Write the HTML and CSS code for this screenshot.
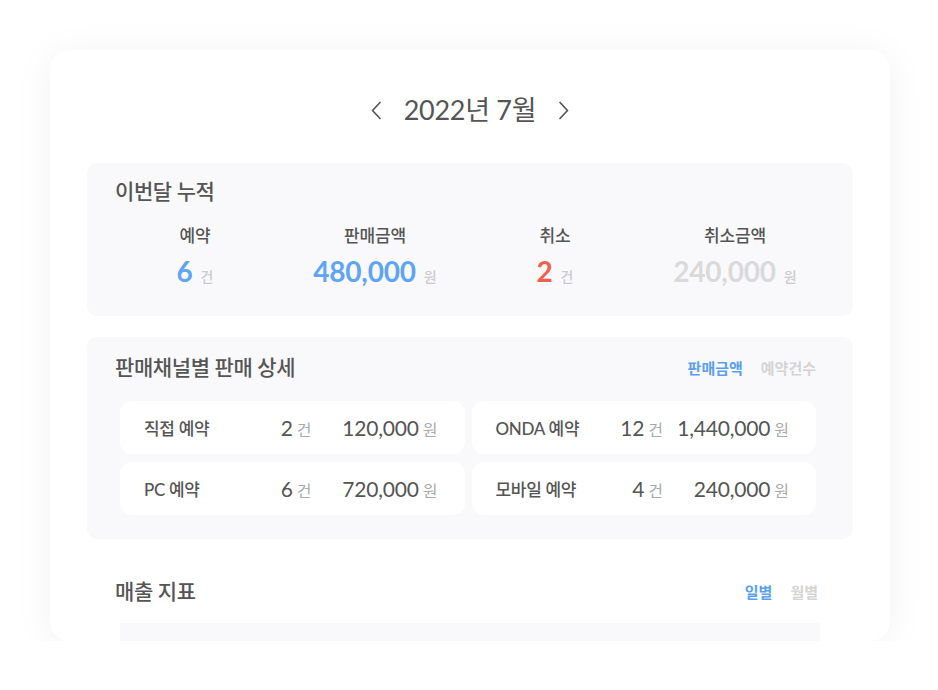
FILE: index.html
```html
<!DOCTYPE html>
<html lang="ko">
<head>
<meta charset="utf-8">
<title>매출 현황</title>
<link rel="stylesheet" href="styles.css">
</head>
<body>
<div class="page">
  <div class="card">
    <div class="month">
      <button class="nav" aria-label="이전 달">
        <svg width="11" height="19" viewBox="0 0 11 19"><path d="M9 1.5 L1.5 9.5 L9 17.5" fill="none" stroke="#555" stroke-width="1.7" stroke-linecap="round" stroke-linejoin="round"/></svg>
      </button>
      <h1 class="month-title">2022년 7월</h1>
      <button class="nav" aria-label="다음 달">
        <svg width="11" height="19" viewBox="0 0 11 19"><path d="M2 1.5 L9.5 9.5 L2 17.5" fill="none" stroke="#555" stroke-width="1.7" stroke-linecap="round" stroke-linejoin="round"/></svg>
      </button>
    </div>

    <section class="panel summary">
      <h2 class="panel-title">이번달 누적</h2>
      <div class="stats">
        <div class="stat">
          <div class="stat-label">예약</div>
          <div class="stat-value blue">6<span class="unit">건</span></div>
        </div>
        <div class="stat">
          <div class="stat-label">판매금액</div>
          <div class="stat-value blue">480,000<span class="unit">원</span></div>
        </div>
        <div class="stat">
          <div class="stat-label">취소</div>
          <div class="stat-value red">2<span class="unit">건</span></div>
        </div>
        <div class="stat">
          <div class="stat-label">취소금액</div>
          <div class="stat-value muted">240,000<span class="unit">원</span></div>
        </div>
      </div>
    </section>

    <section class="panel channels">
      <div class="panel-head">
        <h2 class="panel-title">판매채널별 판매 상세</h2>
        <div class="tabs">
          <span class="tab active">판매금액</span>
          <span class="tab">예약건수</span>
        </div>
      </div>
      <div class="channel-grid">
        <div class="channel">
          <span class="channel-name">직접 예약</span>
          <span class="channel-count">2<span class="unit-sm">건</span></span>
          <span class="channel-amount">120,000<span class="unit-sm">원</span></span>
        </div>
        <div class="channel">
          <span class="channel-name">ONDA 예약</span>
          <span class="channel-count">12<span class="unit-sm">건</span></span>
          <span class="channel-amount">1,440,000<span class="unit-sm">원</span></span>
        </div>
        <div class="channel">
          <span class="channel-name">PC 예약</span>
          <span class="channel-count">6<span class="unit-sm">건</span></span>
          <span class="channel-amount">720,000<span class="unit-sm">원</span></span>
        </div>
        <div class="channel">
          <span class="channel-name">모바일 예약</span>
          <span class="channel-count">4<span class="unit-sm">건</span></span>
          <span class="channel-amount">240,000<span class="unit-sm">원</span></span>
        </div>
      </div>
    </section>

    <section class="sales">
      <div class="sales-head">
        <h2 class="panel-title">매출 지표</h2>
        <div class="tabs">
          <span class="tab active">일별</span>
          <span class="tab">월별</span>
        </div>
      </div>
      <div class="chart"></div>
    </section>
  </div>
</div>
</body>
</html>
```

FILE: styles.css
```css
* { box-sizing: border-box; }

body {
  margin: 0;
  background: #ffffff;
  font-family: Lato, "Noto Sans CJK KR", sans-serif;
  color: #555555;
}

.page {
  padding: 50px 48px 0 50px;
}

.card {
  width: 840px;
  height: 591px;
  background: #ffffff;
  border-radius: 20px;
  box-shadow: 0 4px 40px rgba(0, 0, 0, 0.055);
  overflow: hidden;
  padding: 40px 37px 0 37px;
}

.month {
  display: flex;
  justify-content: center;
  align-items: center;
  height: 40px;
  gap: 22px;
}

.nav {
  border: 0;
  background: none;
  padding: 0;
  display: flex;
  align-items: center;
  cursor: pointer;
}

.month-title {
  margin: 0;
  font-size: 27px;
  font-weight: 400;
  letter-spacing: -0.3px;
  color: #555555;
  line-height: 40px;
}

.panel {
  background: #f9f9fb;
  border-radius: 10px;
}

.panel-title {
  margin: 0;
  font-size: 21px;
  font-weight: 500;
  line-height: 28px;
  letter-spacing: -0.4px;
  color: #555555;
}

.summary {
  margin-top: 33px;
  padding: 14px 28px 22px 28px;
}

.stats {
  display: grid;
  grid-template-columns: repeat(4, 1fr);
  margin: 20px 0 0 -10px;
}

.stat {
  display: flex;
  flex-direction: column;
  align-items: center;
}

.stat-label {
  font-size: 17px;
  line-height: 22px;
  letter-spacing: -0.2px;
  font-weight: 500;
  color: #555555;
}

.stat-value {
  margin-top: 7px;
  font-size: 28px;
  font-weight: 700;
  line-height: 34px;
  letter-spacing: -0.2px;
}

.stat-value.blue { color: #5fa5f6; }
.stat-value.red { color: #f1604f; }
.stat-value.muted { color: #dadada; }

.unit {
  font-size: 14px;
  font-weight: 500;
  color: #cccccc;
  margin-left: 8px;
  letter-spacing: 0;
}

.channels {
  margin-top: 21px;
  padding: 16px 37px 24px 33px;
}

.panel-head,
.sales-head {
  display: flex;
  justify-content: space-between;
  align-items: center;
}

.panel-head {
  margin-left: -5px;
}

.tabs {
  display: flex;
  gap: 18px;
}

.tab {
  font-size: 15px;
  font-weight: 700;
  letter-spacing: 0;
  color: #d4d4d4;
}

.tab.active { color: #5a9ff0; }

.channel-grid {
  margin-top: 20px;
  display: grid;
  grid-template-columns: 1fr 1fr;
  gap: 8px 7px;
}

.channel {
  height: 53px;
  background: #ffffff;
  border-radius: 12px;
  display: grid;
  grid-template-columns: 1fr 52px 126px;
  align-items: center;
  padding: 0 27px 0 24px;
  color: #555555;
}

.channel-name {
  font-size: 17px;
  font-weight: 500;
  letter-spacing: -0.3px;
}

.channel-count,
.channel-amount {
  text-align: right;
  font-size: 21px;
  letter-spacing: -0.2px;
  font-weight: 400;
}

.unit-sm {
  font-size: 16px;
  color: #aaaaaa;
  margin-left: 4px;
  letter-spacing: 0;
}

.sales {
  margin-top: 38px;
  padding: 0 28px;
}

.sales-head {
  padding-right: 7px;
}

.chart {
  margin: 18px 5px 0 5px;
  height: 200px;
  background: #f9f9fb;
}
```
